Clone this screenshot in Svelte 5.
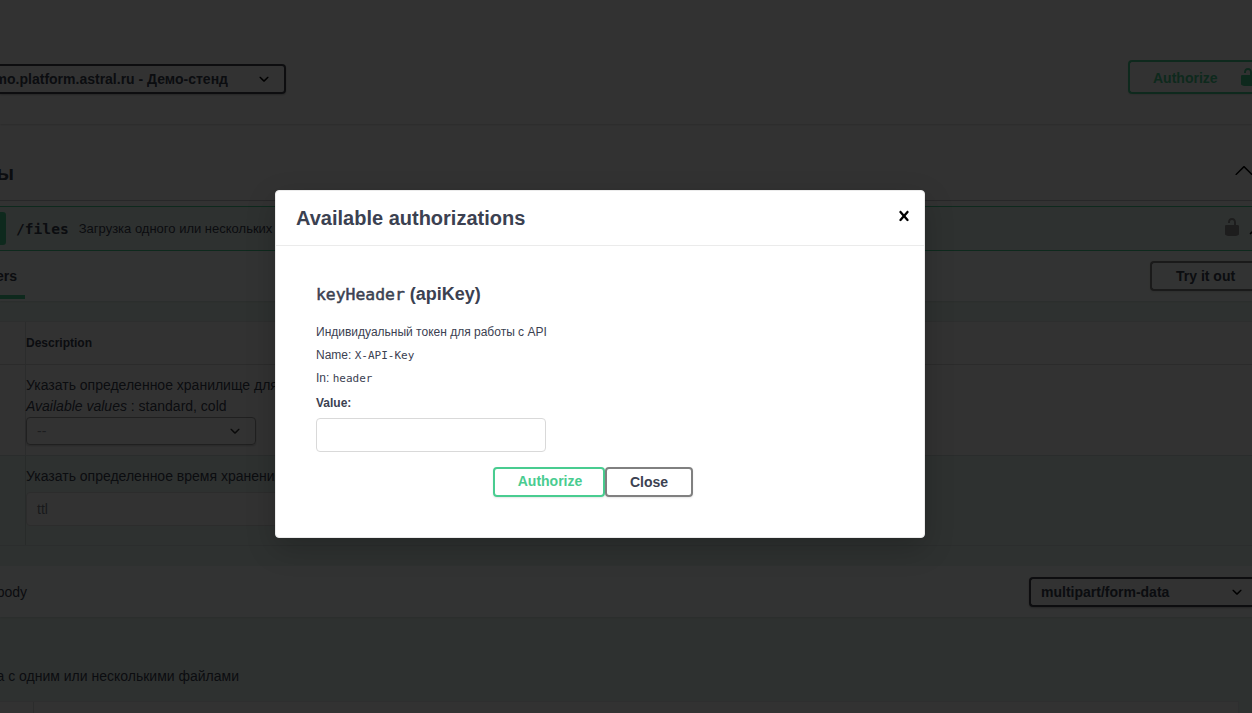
<script>
  let token = $state('');
</script>

{#snippet unlocked(size)}
  <svg class="lock" width={size} height={size} viewBox="0 0 20 20">
    <path d="M15.8 8H14V5.6C14 2.703 12.665 1 10 1 7.334 1 6 2.703 6 5.6V6h2v-.801C8 3.754 8.797 3 10 3c1.203 0 2 .754 2 2.199V8H4c-.553 0-1 .646-1 1.199V17c0 .549.428 1.139.951 1.307l1.197.387C5.672 18.861 6.55 19 7.1 19h5.8c.549 0 1.428-.139 1.951-.307l1.196-.387c.524-.167.953-.757.953-1.306V9.199C17 8.646 16.352 8 15.8 8z" />
  </svg>
{/snippet}

{#snippet down()}
  <svg class="down" width="20" height="20" viewBox="0 0 20 20">
    <path d="M13.418 7.859c.271-.268.709-.268.978 0 .27.268.272.701 0 .969l-3.908 3.83c-.27.268-.707.268-.979 0l-3.908-3.83c-.27-.267-.27-.701 0-.969.271-.268.709-.268.978 0L10 11l3.418-3.141z" />
  </svg>
{/snippet}

{#snippet up()}
  <svg class="up" width="20" height="20" viewBox="0 0 20 20">
    <path d="M17.418 14.908c.272.281.709.281.979 0s.271-.712 0-.969l-7.908-7.83c-.27-.268-.707-.268-.979 0l-7.908 7.83c-.27.268-.27.701 0 .969.271.268.709.268.979 0L10 7.767z" />
  </svg>
{/snippet}

<div class="page">
  <header class="schemes">
    <div class="server"><span>https://demo.platform.astral.ru - Демо-стенд</span>{@render down()}</div>
    <div class="btn authorize"><span>Authorize</span>{@render unlocked(20)}</div>
  </header>

  <div class="tag">
    <h3>Файлы</h3>
    {@render up()}
  </div>

  <section class="op">
    <div class="summary">
      <i class="method"></i>
      <b class="path">/files</b>
      <span class="about">Загрузка одного или нескольких файлов</span>
      {@render unlocked(20)}
      <svg class="mini" width="10" height="10" viewBox="0 0 20 20"><path d="M2 14 L10 6.5 L18 14" /></svg>
    </div>
    <div class="bar">
      <div class="tab"><span>Parameters</span></div>
      <div class="btn try">Try it out</div>
    </div>

    <div class="table">
      <div class="row head"><div class="cell">Description</div></div>
      <div class="row first">
        <div class="cell">
          <p>Указать определенное хранилище для файла</p>
          <p><i>Available values</i> : standard, cold</p>
          <div class="choice"><span>--</span>{@render down()}</div>
        </div>
      </div>
      <div class="row second">
        <div class="cell">
          <p>Указать определенное время хранения файла</p>
          <div class="ttl">ttl</div>
        </div>
      </div>
    </div>

    <div class="bar body">
      <div class="request"><span>Request body</span></div>
      <div class="media"><span>multipart/form-data</span>{@render down()}</div>
    </div>
    <div class="note"><span>Форма с одним или несколькими файлами</span></div>
    <div class="schema"><i></i></div>
  </section>
</div>

<div class="backdrop">
  <div class="modal">
    <div class="title">
      <h3>Available authorizations</h3>
      <svg width="20" height="20" viewBox="0 0 20 20">
        <path d="M14.348 14.849c-.469.469-1.229.469-1.697 0L10 11.819l-2.651 3.029c-.469.469-1.229.469-1.697 0-.469-.469-.469-1.229 0-1.697l2.758-3.15-2.759-3.152c-.469-.469-.469-1.228 0-1.697.469-.469 1.228-.469 1.697 0L10 8.183l2.651-3.031c.469-.469 1.228-.469 1.697 0 .469.469.469 1.229 0 1.697l-2.758 3.152 2.758 3.15c.469.469.469 1.229 0 1.698z" />
      </svg>
    </div>
    <div class="content">
      <h4><code>keyHeader</code> (apiKey)</h4>
      <p>Индивидуальный токен для работы с API</p>
      <p>Name: <code>X-API-Key</code></p>
      <p>In: <code>header</code></p>
      <label for="token">Value:</label>
      <input id="token" type="text" bind:value={token} />
      <div class="actions">
        <button class="ok"><span>Authorize</span></button>
        <button>Close</button>
      </div>
    </div>
  </div>
</div>

<style>
  :global(body) { margin: 0; overflow: hidden; background: #fafafa; }
  .page, .backdrop, .backdrop * { box-sizing: border-box; }
  .page * { box-sizing: border-box; }
  .page {
    width: 1252px; height: 713px; overflow: hidden;
    font-family: "Liberation Sans", Arial, sans-serif; font-size: 14px; color: #3b4151; white-space: nowrap;
  }
  h3, h4, p { margin: 0; }
  svg { flex: none; display: block; }

  .schemes {
    height: 124px; display: flex; justify-content: space-between; align-items: flex-start;
    box-shadow: 0 1px 2px rgba(0, 0, 0, .15);
  }
  .server {
    width: 286px; height: 30px; margin-top: 64px; padding-right: 10px;
    display: flex; align-items: center; justify-content: flex-end; gap: 26px;
    border: 2px solid #41444e; border-left: 0; border-radius: 0 4px 4px 0;
    box-shadow: 0 1px 2px rgba(0, 0, 0, .25); font-weight: 700;
  }
  .btn {
    display: flex; align-items: center; flex: none; font-weight: 700;
    border: 2px solid gray; border-right: 0; border-radius: 4px 0 0 4px; box-shadow: 0 1px 2px rgba(0, 0, 0, .1);
  }
  .authorize {
    width: 124px; height: 34px; margin-top: 60px; padding-left: 23px; gap: 20px;
    color: #49cc90; border-color: #49cc90; overflow: hidden;
  }
  .authorize .lock { fill: #49cc90; }
  .authorize span { padding-top: 2px; }

  .tag {
    height: 77px; padding-top: 22px; display: flex; align-items: center; justify-content: space-between;
    border-bottom: 1px solid rgba(59, 65, 81, .3);
  }
  .tag h3 { width: 14px; display: flex; justify-content: flex-end; font-size: 20.5px; line-height: 28px; }
  .tag .up { margin-right: -2px; margin-top: -6px; }

  .op { margin-top: 5px; border-top: 1px solid #49cc90; background: rgba(73, 204, 144, .1); }
  .summary { height: 44px; display: flex; align-items: center; border-bottom: 1px solid #49cc90; }
  .method { width: 6px; height: 33px; border-radius: 0 3px 3px 0; background: #49cc90; }
  .path { margin-left: 10px; font: 700 14.6px "DejaVu Sans Mono", monospace; }
  .about { margin: 0 auto 0 10px; font-size: 13px; }
  .summary .lock { fill: #909090; margin: -3px 7px 0 0; }
  .mini { margin-right: -7px; margin-top: 6px; fill: none; stroke: #000; stroke-width: 3; }

  .bar {
    height: 50px; display: flex; align-items: center; justify-content: space-between;
    background: rgba(255, 255, 255, .8); box-shadow: 0 1px 2px rgba(0, 0, 0, .1);
  }
  .tab {
    width: 25px; height: 48px; margin-top: -2px; padding-right: 8px;
    display: flex; align-items: center; justify-content: flex-end;
    border-bottom: 4px solid #49cc90; font-weight: 700;
  }
  .tab span { padding-top: 5px; }
  .try { width: 102px; height: 30px; padding-left: 24px; }

  .table { margin-top: 20px; }
  .row { display: flex; padding-left: 25px; border-top: 1px solid rgba(59, 65, 81, .13); }
  .cell { flex: 1; border-left: 1px solid rgba(59, 65, 81, .18); }
  .head { height: 43px; background: #fafafa; border-top-color: rgba(59, 65, 81, .12); font-size: 12px; font-weight: 700; line-height: 42px; }
  .first { height: 91px; background: #fafafa; border-color: rgba(59, 65, 81, .2); }
  .second { height: 91px; border-bottom: 1px solid rgba(59, 65, 81, .1); }
  .first .cell, .second .cell { padding-top: 10px; }
  .cell p { line-height: 21px; }
  .choice {
    width: 230px; height: 28px; padding: 0 10px;
    display: flex; align-items: center; justify-content: space-between;
    border: 1px solid #888; border-radius: 4px; box-shadow: 0 1px 2px rgba(0, 0, 0, .25); opacity: .8;
  }
  .choice span { opacity: .7; }
  .ttl {
    width: 340px; height: 34px; margin-top: 5px; padding-left: 10px; line-height: 33px;
    border: 1px solid #d9d9d9; border-radius: 4px; background: #fafafa; color: #7b7e86;
  }

  .body { height: 51px; margin-top: 20px; }
  .request { width: 27px; display: flex; justify-content: flex-end; }
  .media {
    width: 223px; height: 30px; padding: 0 5px 0 10px; display: flex; align-items: center; justify-content: space-between;
    border: 2px solid #41444e; border-right: 0; border-radius: 4px 0 0 4px;
    background: #f7f7f7; box-shadow: 0 1px 2px rgba(0, 0, 0, .25); font-weight: 700;
  }
  .note { width: 239px; height: 84px; padding-top: 49px; line-height: 21px; display: flex; justify-content: flex-end; }
  .schema {
    width: 1239px; height: 12px; padding-left: 33px; background: #fafafa;
    border: 1px solid rgba(59, 65, 81, .1); border-left: 0; border-bottom: 0;
  }
  .schema i { display: block; width: 1px; height: 100%; background: rgba(59, 65, 81, .18); }

  .backdrop {
    position: absolute; inset: 0; width: 1252px; height: 713px; padding: 190px 0 0 275px;
    background: rgba(0, 0, 0, .8);
    font-family: "Liberation Sans", Arial, sans-serif; font-size: 12px; color: #3b4151; white-space: nowrap;
  }
  .modal {
    width: 650px; height: 348px; background: #fff; border: 1px solid #ebebeb; border-radius: 4px;
    box-shadow: 0 10px 30px rgba(0, 0, 0, .2);
  }
  .title {
    height: 55px; padding: 0 10px 0 20px; display: flex; align-items: center; justify-content: space-between;
    border-bottom: 1px solid #ebebeb;
  }
  .title h3 { font-size: 20px; font-weight: 700; line-height: 24px; }
  .title svg { margin-top: -4px; }
  .content { padding: 37px 40px 0; display: flex; flex-direction: column; }
  h4 { font-size: 18px; line-height: 22px; }
  h4 + p { margin-top: 16px; }
  code { font-family: "DejaVu Sans Mono", monospace; line-height: 1; }
  h4 code { font-size: 16.4px; font-weight: 400; -webkit-text-stroke: .5px #3b4151; }
  p code { font-size: 11px; }
  .content p { height: 23px; line-height: 23px; }
  label { margin-top: 2px; height: 23px; line-height: 23px; font-weight: 700; }
  input { width: 230px; height: 34px; margin-top: 3px; padding: 0 10px; border: 1px solid #d9d9d9; border-radius: 4px; background: #fff; }
  .actions { display: flex; margin: 15px 0 0 177px; }
  button {
    width: 88px; height: 30px; padding: 0; border: 2px solid gray; border-radius: 4px; background: transparent;
    box-shadow: 0 1px 2px rgba(0, 0, 0, .1); font: 700 14px "Liberation Sans", Arial, sans-serif; color: #3b4151;
  }
  .ok { width: 112px; color: #49cc90; border-color: #49cc90; }
  .ok span { display: block; padding: 0 0 2px 2px; }
</style>
